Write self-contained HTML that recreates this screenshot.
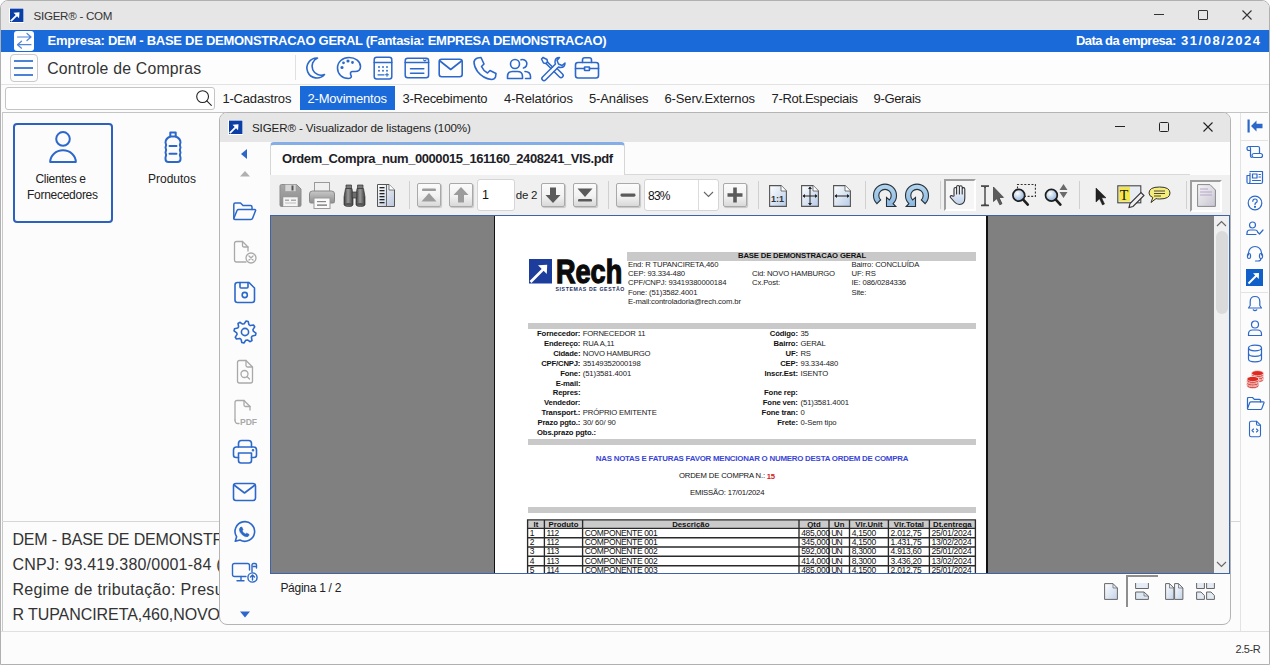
<!DOCTYPE html>
<html><head><meta charset="utf-8"><title>SIGER</title>
<style>
html,body{margin:0;padding:0;width:1270px;height:665px;overflow:hidden;background:#fcfcfc;}
body{position:relative;font-family:"Liberation Sans", sans-serif;}
.a{position:absolute;box-sizing:border-box;}
.t{position:absolute;white-space:pre;font-family:"Liberation Sans", sans-serif;}
svg.a{overflow:visible;}
</style></head><body>
<div class="a" style="left:0px;top:0px;width:1270px;height:665px;background:#fcfcfc;border:1px solid #b0b0b0;border-radius:8px 8px 0 0;"></div>
<div class="a" style="left:1px;top:1px;width:1268px;height:29px;background:#e6e6e6;border-radius:7px 7px 0 0;"></div>
<svg class="a" style="left:9px;top:8px;" width="15" height="15" viewBox="0 0 15 15"><rect x="0" y="0" width="15" height="15" fill="#fff"/>
<rect x="1" y="0.6" width="13.40" height="13.40" fill="#0b3fa6"/>
<path d="M1.80 13.20 L8.10 6.90" stroke="#fff" stroke-width="1.80" fill="none"/>
<path d="M4.50 4.65 L10.50 4.20 L10.05 10.20 Z" fill="#fff"/></svg>
<div class="t" style="left:33.50px;top:10.18px;font-size:11.6px;line-height:11.6px;color:#333;letter-spacing:-0.274px;">SIGER® - COM</div>
<div class="a" style="left:1154px;top:14px;width:10px;height:1px;background:#333;"></div>
<div class="a" style="left:1198px;top:10px;width:10px;height:10px;border:1px solid #333;border-radius:1px;"></div>
<svg class="a" style="left:1242px;top:10px;" width="10" height="10" viewBox="0 0 10 10"><path d="M0.5 0.5 L9.5 9.5 M9.5 0.5 L0.5 9.5" stroke="#333" stroke-width="1.1"/></svg>
<div class="a" style="left:1px;top:30px;width:1268px;height:22px;background:#1b6ad9;"></div>
<div class="a" style="left:14px;top:31px;width:20px;height:20px;background:#fff;border-radius:3px;"></div>
<svg class="a" style="left:14px;top:31px;" width="20" height="20" viewBox="0 0 20 20"><path d="M3.5 6 H17 M13 2.5 L17 6 L13 9.5" stroke="#4f86d8" stroke-width="1.2" fill="none" stroke-linecap="round" stroke-linejoin="round"/>
<path d="M17 13.7 H3.5 M7.5 10.2 L3.5 13.7 L7.5 17.2" stroke="#4f86d8" stroke-width="1.2" fill="none" stroke-linecap="round" stroke-linejoin="round"/></svg>
<div class="t" style="left:47.60px;top:34.00px;font-size:13px;line-height:13px;font-weight:700;color:#fff;letter-spacing:-0.278px;">Empresa: DEM - BASE DE DEMONSTRACAO GERAL (Fantasia: EMPRESA DEMONSTRACAO)</div>
<div class="t" style="left:1076.00px;top:34.00px;font-size:13px;line-height:13px;font-weight:700;color:#fff;letter-spacing:-0.539px;">Data da empresa:</div>
<div class="t" style="left:1181.00px;top:34.00px;font-size:13px;line-height:13px;font-weight:700;color:#fff;letter-spacing:1.548px;">31/08/2024</div>
<div class="a" style="left:1px;top:52px;width:1268px;height:32px;background:#fdfdfd;"></div>
<div class="a" style="left:10px;top:54px;width:28px;height:28px;border:1px solid #c9c9c9;border-radius:4px;background:#fdfdfd;"></div>
<div class="a" style="left:14px;top:60.25px;width:19px;height:1.5px;background:#4b82d6;"></div>
<div class="a" style="left:14px;top:67.25px;width:19px;height:1.5px;background:#4b82d6;"></div>
<div class="a" style="left:14px;top:74.25px;width:19px;height:1.5px;background:#4b82d6;"></div>
<div class="t" style="left:47.20px;top:60.63px;font-size:15.8px;line-height:15.8px;color:#333;letter-spacing:0.213px;">Controle de Compras</div>
<div class="a" style="left:295px;top:55px;width:1px;height:25px;background:#e0e0e0;"></div>
<div class="a" style="left:1px;top:84px;width:1268px;height:1px;background:#e3e3e3;"></div>
<div class="a" style="left:5px;top:87px;width:210px;height:23px;border:1px solid #c4c4c4;border-radius:3px;background:#fff;"></div>
<svg class="a" style="left:196px;top:90px;" width="17" height="17" viewBox="0 0 17 17"><circle cx="6.6" cy="6.6" r="5.9" stroke="#222" stroke-width="1.1" fill="none"/><path d="M10.8 10.8 L15.3 15.3" stroke="#222" stroke-width="1.1" stroke-linecap="round"/></svg>
<div class="a" style="left:300px;top:86px;width:95px;height:24px;background:#1b6ad9;"></div>
<div class="t" style="left:222.40px;top:92.00px;font-size:13px;line-height:13px;color:#222;letter-spacing:-0.181px;">1-Cadastros</div>
<div class="t" style="left:307.50px;top:92.00px;font-size:13px;line-height:13px;color:#fff;letter-spacing:-0.195px;">2-Movimentos</div>
<div class="t" style="left:402.50px;top:92.00px;font-size:13px;line-height:13px;color:#222;letter-spacing:-0.263px;">3-Recebimento</div>
<div class="t" style="left:504.00px;top:92.00px;font-size:13px;line-height:13px;color:#222;letter-spacing:-0.099px;">4-Relatórios</div>
<div class="t" style="left:589.00px;top:92.00px;font-size:13px;line-height:13px;color:#222;letter-spacing:-0.133px;">5-Análises</div>
<div class="t" style="left:664.40px;top:92.00px;font-size:13px;line-height:13px;color:#222;letter-spacing:-0.117px;">6-Serv.Externos</div>
<div class="t" style="left:771.50px;top:92.00px;font-size:13px;line-height:13px;color:#222;letter-spacing:-0.324px;">7-Rot.Especiais</div>
<div class="t" style="left:873.50px;top:92.00px;font-size:13px;line-height:13px;color:#222;letter-spacing:-0.336px;">9-Gerais</div>
<div class="a" style="left:2px;top:112px;width:1266px;height:1px;background:#c4c4c4;"></div>
<div class="a" style="left:1px;top:631px;width:1268px;height:1px;background:#e0e0e0;"></div>
<div class="t" style="left:1235.40px;top:643.69px;font-size:11px;line-height:11px;color:#333;letter-spacing:-0.375px;">2.5-R</div>
<div class="a" style="left:1240px;top:113px;width:1px;height:518px;background:#e3e3e3;"></div>
<div class="a" style="left:1241px;top:140px;width:27px;height:1px;background:#e3e3e3;"></div>
<div class="a" style="left:1241px;top:292px;width:27px;height:1px;background:#e3e3e3;"></div>
<div class="a" style="left:2px;top:112px;width:1px;height:519px;background:#c8c8c8;"></div>
<div class="a" style="left:2px;top:521px;width:1238px;height:1px;background:#d6d6d6;"></div>
<div class="t" style="left:12.40px;top:532.26px;font-size:16px;line-height:16px;color:#333;letter-spacing:-0.166px;">DEM - BASE DE DEMONSTRACAO GERAL</div>
<div class="t" style="left:12.40px;top:557.16px;font-size:16px;line-height:16px;color:#333;letter-spacing:0.217px;">CNPJ: 93.419.380/0001-84 (Matriz)</div>
<div class="t" style="left:12.40px;top:582.06px;font-size:16px;line-height:16px;color:#333;letter-spacing:0.324px;">Regime de tributação: Presumido</div>
<div class="t" style="left:12.40px;top:606.96px;font-size:16px;line-height:16px;color:#333;letter-spacing:-0.06px;">R TUPANCIRETA,460,NOVO HAMBURGO</div>
<div class="a" style="left:13px;top:123px;width:100px;height:100px;border:2px solid #2c62bd;border-radius:4px;"></div>
<div class="t" style="left:35.50px;top:173.24px;font-size:12px;line-height:12px;color:#222;letter-spacing:-0.318px;">Clientes e</div>
<div class="t" style="left:27.00px;top:189.04px;font-size:12px;line-height:12px;color:#222;letter-spacing:-0.277px;">Fornecedores</div>
<div class="t" style="left:148.00px;top:173.24px;font-size:12px;line-height:12px;color:#222;">Produtos</div>
<div class="a" style="left:219px;top:112px;width:1012px;height:513px;background:#fcfcfc;border:1px solid #b4b4b4;border-radius:8px;"></div>
<div class="a" style="left:220px;top:113px;width:1010px;height:29px;background:#e6e6e6;border-radius:7px 7px 0 0;"></div>
<svg class="a" style="left:228px;top:120px;" width="15" height="15" viewBox="0 0 15 15"><rect x="0" y="0" width="15" height="15" fill="#fff"/>
<rect x="1" y="0.6" width="13.40" height="13.40" fill="#0b3fa6"/>
<path d="M1.80 13.20 L8.10 6.90" stroke="#fff" stroke-width="1.80" fill="none"/>
<path d="M4.50 4.65 L10.50 4.20 L10.05 10.20 Z" fill="#fff"/></svg>
<div class="t" style="left:252.00px;top:121.93px;font-size:11.6px;line-height:11.6px;color:#222;letter-spacing:-0.117px;">SIGER® - Visualizador de listagens (100%)</div>
<div class="a" style="left:1115px;top:126px;width:10px;height:1px;background:#222;"></div>
<div class="a" style="left:1159px;top:122px;width:10px;height:10px;border:1px solid #222;border-radius:1.5px;"></div>
<svg class="a" style="left:1203px;top:122px;" width="10" height="10" viewBox="0 0 10 10"><path d="M0.5 0.5 L9.5 9.5 M9.5 0.5 L0.5 9.5" stroke="#222" stroke-width="1.1"/></svg>
<svg class="a" style="left:240px;top:149px;" width="8" height="10" viewBox="0 0 8 10"><path d="M7 0 L7 10 L1 5 Z" fill="#2c68ca"/></svg>
<svg class="a" style="left:239px;top:170px;" width="12" height="7" viewBox="0 0 12 7"><path d="M1 6.5 L6 1 L11 6.5 Z" fill="#b0b0b0"/></svg>
<svg class="a" style="left:232px;top:201px;" width="26" height="22" viewBox="0 0 26 22"><g fill="none" stroke="#2c68ca" stroke-width="1.5" stroke-linecap="round" stroke-linejoin="round"><path d="M1.8 17.5 V3.5 Q1.8 2 3.3 2 H8.5 L11 4.5 H18.5 Q20 4.5 20 6 V8.5"/><path d="M1.8 17.5 L5 9.5 Q5.5 8.5 6.7 8.5 H22.6 Q24 8.5 23.5 9.8 L20.6 17.2 Q20.2 18.5 18.8 18.5 H2.8 Q1.8 18.5 1.8 17.5 Z"/></g></svg>
<svg class="a" style="left:232px;top:240px;" width="26" height="24" viewBox="0 0 26 24"><g fill="none" stroke="#a9a9a9" stroke-width="1.3" stroke-linecap="round" stroke-linejoin="round"><path d="M14 22 H4.5 Q2.5 22 2.5 20 V3.5 Q2.5 1.5 4.5 1.5 H10.5 L16 7 V11"/><path d="M10.5 1.5 V5.5 Q10.5 7 12 7 H16"/><circle cx="19" cy="18" r="5"/><path d="M17 16 L21 20 M21 16 L17 20"/></g></svg>
<svg class="a" style="left:233px;top:281px;" width="24" height="23" viewBox="0 0 24 23"><g fill="none" stroke="#2c68ca" stroke-width="1.6" stroke-linecap="round" stroke-linejoin="round"><path d="M2 4 Q2 1.5 4.5 1.5 H16 L21.5 7 V19 Q21.5 21.5 19 21.5 H4.5 Q2 21.5 2 19 Z"/><path d="M7 1.5 V6 Q7 7 8 7 H14 Q15 7 15 6 V1.5"/><circle cx="11.75" cy="14" r="2.6"/></g></svg>
<svg class="a" style="left:232.5px;top:320px;" width="24" height="24" viewBox="0 0 24 24"><g fill="none" stroke="#2c68ca" stroke-width="1.6" stroke-linecap="round" stroke-linejoin="round"><path d="M20.26 11.19 L22.95 13.08 L22.53 15.19 L19.32 15.91 L18.42 17.27 L18.98 20.50 L17.19 21.70 L14.41 19.94 L12.81 20.26 L10.92 22.95 L8.81 22.53 L8.09 19.32 L6.73 18.42 L3.50 18.98 L2.30 17.19 L4.06 14.41 L3.74 12.81 L1.05 10.92 L1.47 8.81 L4.68 8.09 L5.58 6.73 L5.02 3.50 L6.81 2.30 L9.59 4.06 L11.19 3.74 L13.08 1.05 L15.19 1.47 L15.91 4.68 L17.27 5.58 L20.50 5.02 L21.70 6.81 L19.94 9.59 Z"/><circle cx="12" cy="12" r="3.6"/></g></svg>
<svg class="a" style="left:234px;top:359px;" width="22" height="26" viewBox="0 0 22 26"><g fill="none" stroke="#a9a9a9" stroke-width="1.3" stroke-linecap="round" stroke-linejoin="round"><path d="M3.5 3.5 Q3.5 1.5 5.5 1.5 H12 L18.5 8 V22 Q18.5 24 16.5 24 H5.5 Q3.5 24 3.5 22 Z"/><path d="M12 1.5 V6.5 Q12 8 13.5 8 H18.5"/><circle cx="10.5" cy="15" r="3.5"/><path d="M13 17.5 L15.5 20"/></g></svg>
<svg class="a" style="left:232px;top:399px;" width="26" height="27" viewBox="0 0 26 27"><g fill="none" stroke="#a9a9a9" stroke-width="1.3" stroke-linecap="round" stroke-linejoin="round"><path d="M3 21 V3.5 Q3 1.5 5 1.5 H12 L18 7.5 V11"/><path d="M12 1.5 V6 Q12 7.5 13.5 7.5 H18"/><path d="M3 21 Q3 24.5 6 24.5 H7"/></g></svg>
<div class="t" style="left:240.00px;top:417.72px;font-size:8.6px;line-height:8.6px;font-weight:700;color:#a9a9a9;letter-spacing:-0.100px;">PDF</div>
<svg class="a" style="left:232px;top:439px;" width="26" height="26" viewBox="0 0 26 26"><g fill="none" stroke="#2c68ca" stroke-width="1.6" stroke-linecap="round" stroke-linejoin="round"><path d="M6.5 8 V4.5 Q6.5 1.5 9.5 1.5 H16.5 Q19.5 1.5 19.5 4.5 V8"/><path d="M6.5 18.5 H4 Q1.5 18.5 1.5 16 V11 Q1.5 8 4.5 8 H21.5 Q24.5 8 24.5 11 V16 Q24.5 18.5 22 18.5 H19.5"/><path d="M6.5 14 H19.5 V21.5 Q19.5 24 17 24 H9 Q6.5 24 6.5 21.5 Z"/><circle cx="21" cy="11.3" r="0.5" fill="#2c68ca"/></g></svg>
<svg class="a" style="left:232px;top:482px;" width="25" height="20" viewBox="0 0 25 20"><g fill="none" stroke="#2c68ca" stroke-width="1.6" stroke-linecap="round" stroke-linejoin="round"><rect x="1.5" y="1.5" width="22" height="17" rx="2.5"/><path d="M2 3 L12.5 11 L23 3"/></g></svg>
<svg class="a" style="left:232px;top:520px;" width="24" height="24" viewBox="0 0 24 24"><g fill="none" stroke="#2c68ca" stroke-width="1.6" stroke-linecap="round" stroke-linejoin="round"><path d="M3.3 21.2 L4.6 16.8 A9.8 9.8 0 1 1 8 20 Z"/><path d="M8.3 7.6 Q9 6.7 9.8 7 L11 9.5 Q11.1 10 10.2 10.8 Q11 13 13.5 14 Q14.2 13.2 14.6 13.2 L17 14.3 Q17.2 15.6 16 16.5 Q13.5 17.5 10.5 15 Q7.5 12.5 7.4 9.8 Q7.4 8.5 8.3 7.6 Z" fill="#2c68ca" stroke-width="0.6"/></g></svg>
<svg class="a" style="left:231px;top:562px;" width="28" height="21" viewBox="0 0 28 21"><g fill="none" stroke="#2c68ca" stroke-width="1.4" stroke-linecap="round" stroke-linejoin="round"><path d="M15 14.5 H3.5 Q1.5 14.5 1.5 12.5 V3.5 Q1.5 1.5 3.5 1.5 H16.5 Q18.5 1.5 18.5 3.5 V8"/><path d="M10 14.5 V18.5 M6 18.8 H13"/><path d="M21 10 V3 Q21 1.5 22.5 1.5 H24 Q25.5 1.5 25.5 3 V6"/><path d="M22 4.5 H24.5"/><circle cx="21.5" cy="15.5" r="4.6"/><path d="M21.5 18 V13 M19.5 15 L21.5 13 L23.5 15"/></g></svg>
<svg class="a" style="left:239px;top:610px;" width="12" height="9" viewBox="0 0 12 9"><path d="M1 1.5 L11 1.5 L6 7.5 Z" fill="#2c68ca"/></svg>
<div class="a" style="left:270px;top:142px;width:355px;height:33px;background:#fdfdfd;border:1px solid #d6d6d6;border-top:3px solid #86aee6;border-bottom:none;border-radius:4px 4px 0 0;"></div>
<div class="t" style="left:282.00px;top:151.70px;font-size:13px;line-height:13px;font-weight:700;color:#1e1e28;letter-spacing:-0.424px;">Ordem_Compra_num_0000015_161160_2408241_VIS.pdf</div>
<div class="a" style="left:270px;top:175px;width:960px;height:40px;background:#f0f0f0;"></div>
<div class="a" style="left:624px;top:174px;width:566px;height:1px;background:#d9d9d9;"></div>
<div class="a" style="left:1190px;top:142px;width:40px;height:33px;background:#fdfdfd;"></div>
<div class="a" style="left:409px;top:181px;width:1px;height:28px;background:#d0d0d0;"></div>
<div class="a" style="left:608px;top:181px;width:1px;height:28px;background:#d0d0d0;"></div>
<div class="a" style="left:758px;top:181px;width:1px;height:28px;background:#d0d0d0;"></div>
<div class="a" style="left:865px;top:181px;width:1px;height:28px;background:#d0d0d0;"></div>
<div class="a" style="left:940px;top:181px;width:1px;height:28px;background:#d0d0d0;"></div>
<div class="a" style="left:1079px;top:181px;width:1px;height:28px;background:#d0d0d0;"></div>
<div class="a" style="left:1186px;top:181px;width:1px;height:28px;background:#d0d0d0;"></div>
<svg class="a" style="left:279px;top:184px;" width="23" height="23" viewBox="0 0 23 23"><defs><linearGradient id="gd" x1="0" y1="0" x2="0" y2="1"><stop offset="0" stop-color="#a8a8a8"/><stop offset="1" stop-color="#8a8a8a"/></linearGradient></defs>
<path d="M1 2 Q1 0.5 2.5 0.5 H17.5 L22 5 V21 Q22 22.5 20.5 22.5 H2.5 Q1 22.5 1 21 Z" fill="url(#gd)" stroke="#8d8d8d"/>
<rect x="6" y="0.5" width="11" height="7" fill="#d6d6d6" stroke="#9a9a9a" stroke-width="0.6"/>
<rect x="12.5" y="1.5" width="2" height="5" fill="#555"/>
<rect x="4" y="13" width="15" height="9.5" fill="#f4f4f4" stroke="#9a9a9a" stroke-width="0.6"/>
<rect x="6" y="15.5" width="4" height="1.5" fill="#aaa"/><rect x="12" y="15.5" width="5" height="1.5" fill="#aaa"/><rect x="6" y="18.5" width="11" height="1" fill="#bbb"/></svg>
<svg class="a" style="left:309px;top:182px;" width="26" height="27" viewBox="0 0 26 27"><defs><linearGradient id="gp" x1="0" y1="0" x2="0" y2="1"><stop offset="0" stop-color="#c8c8c8"/><stop offset="1" stop-color="#8f8f8f"/></linearGradient></defs>
<rect x="5.5" y="0.5" width="15" height="10" fill="#f0f0f0" stroke="#9a9a9a"/>
<path d="M0.5 12 Q0.5 9 3.5 9 H22.5 Q25.5 9 25.5 12 V19.5 Q25.5 21 24 21 H2 Q0.5 21 0.5 19.5 Z" fill="url(#gp)" stroke="#888"/>
<rect x="5" y="16" width="16" height="10.5" fill="#fafafa" stroke="#9a9a9a"/>
<rect x="8" y="19" width="9" height="1.2" fill="#888"/><rect x="8" y="22.5" width="10" height="1.2" fill="#666"/></svg>
<svg class="a" style="left:343px;top:184px;" width="24" height="24" viewBox="0 0 24 24"><defs><linearGradient id="gb" x1="0" y1="0" x2="1" y2="0"><stop offset="0" stop-color="#3c3c3c"/><stop offset="0.45" stop-color="#9a9a9a"/><stop offset="1" stop-color="#3c3c3c"/></linearGradient></defs>
<g stroke="#333" stroke-width="0.7">
<path d="M3 1 H8.5 V4.5 H3 Z" fill="#7a7a7a"/><path d="M14.5 1 H20 V4.5 H14.5 Z" fill="#7a7a7a"/>
<path d="M2.5 4.5 H9 L10 13 V20.5 Q10 22.5 6 22.5 Q1 22.5 1 20.5 V13 Z" fill="url(#gb)"/>
<path d="M14 4.5 H20.5 L22 13 V20.5 Q22 22.5 17.5 22.5 Q13 22.5 13 20.5 V13 Z" fill="url(#gb)"/>
<path d="M9.2 8 H13.8 V14 H9.2 Z" fill="#6d6d6d"/></g>
<ellipse cx="5.5" cy="20.3" rx="3.6" ry="1.4" fill="#555"/><ellipse cx="17.5" cy="20.3" rx="3.6" ry="1.4" fill="#555"/></svg>
<svg class="a" style="left:377px;top:184px;" width="19" height="24" viewBox="0 0 19 24"><defs><linearGradient id="gr" x1="0" y1="0" x2="1" y2="1"><stop offset="0" stop-color="#fff"/><stop offset="1" stop-color="#b9c6dd"/></linearGradient></defs>
<path d="M0.5 0.5 H12 L17.5 6 V22.5 H0.5 Z" fill="url(#gr)" stroke="#555"/>
<path d="M12 0.5 V6 H17.5" fill="#fff" stroke="#555" stroke-width="0.8"/>
<rect x="9" y="0.5" width="1" height="22" fill="#666"/>
<g fill="#222"><rect x="2.5" y="3" width="5" height="1.3"/><rect x="2.5" y="6" width="5" height="1.3"/><rect x="2.5" y="9" width="5" height="1.3"/><rect x="2.5" y="12" width="5" height="1.3"/><rect x="2.5" y="15" width="5" height="1.3"/><rect x="2.5" y="18" width="5" height="1.3"/></g></svg>
<div class="a" style="left:417px;top:183px;width:24px;height:24px;border:1px solid #a9a9a9;border-radius:2px;background:linear-gradient(#fbfbfb,#f2f2f2 55%,#d9d9d9);box-shadow:1px 1px 1px rgba(0,0,0,0.18);"></div>
<svg class="a" style="left:417px;top:183px;" width="24" height="24" viewBox="0 0 24 24"><rect x="5" y="5.5" width="14" height="2.6" rx="1.2" fill="#9c9c9c"/><path d="M4.5 18.5 L12 10 L19.5 18.5 Z" fill="#9c9c9c"/></svg>
<div class="a" style="left:449px;top:183px;width:24px;height:24px;border:1px solid #a9a9a9;border-radius:2px;background:linear-gradient(#fbfbfb,#f2f2f2 55%,#d9d9d9);box-shadow:1px 1px 1px rgba(0,0,0,0.18);"></div>
<svg class="a" style="left:449px;top:183px;" width="24" height="24" viewBox="0 0 24 24"><path d="M12 4 L19.5 12 H15 V19.5 H9 V12 H4.5 Z" fill="#9c9c9c"/></svg>
<div class="a" style="left:477px;top:179px;width:38px;height:32px;background:#fff;border:1px solid #d5d5d5;border-radius:3px;"></div>
<div class="t" style="left:482.00px;top:189.42px;font-size:12.5px;line-height:12.5px;color:#111;">1</div>
<div class="t" style="left:515.80px;top:190.27px;font-size:11.5px;line-height:11.5px;color:#222;letter-spacing:-0.294px;">de 2</div>
<div class="a" style="left:541px;top:183px;width:24px;height:24px;border:1px solid #a9a9a9;border-radius:2px;background:linear-gradient(#fbfbfb,#f2f2f2 55%,#d9d9d9);box-shadow:1px 1px 1px rgba(0,0,0,0.18);"></div>
<svg class="a" style="left:541px;top:183px;" width="24" height="24" viewBox="0 0 24 24"><path d="M12 20 L19.5 12 H15 V4.5 H9 V12 H4.5 Z" fill="#5a5a5a"/></svg>
<div class="a" style="left:573px;top:183px;width:24px;height:24px;border:1px solid #a9a9a9;border-radius:2px;background:linear-gradient(#fbfbfb,#f2f2f2 55%,#d9d9d9);box-shadow:1px 1px 1px rgba(0,0,0,0.18);"></div>
<svg class="a" style="left:573px;top:183px;" width="24" height="24" viewBox="0 0 24 24"><path d="M4.5 5.5 L12 14 L19.5 5.5 Z" fill="#5a5a5a"/><rect x="5" y="16" width="14" height="2.6" rx="1.2" fill="#5a5a5a"/></svg>
<div class="a" style="left:616px;top:183px;width:24px;height:24px;border:1px solid #a9a9a9;border-radius:2px;background:linear-gradient(#fbfbfb,#f2f2f2 55%,#d9d9d9);box-shadow:1px 1px 1px rgba(0,0,0,0.18);"></div>
<svg class="a" style="left:616px;top:183px;" width="24" height="24" viewBox="0 0 24 24"><rect x="4.5" y="10.5" width="15" height="3.2" rx="1.4" fill="#5a5a5a"/></svg>
<div class="a" style="left:644px;top:179px;width:75px;height:32px;background:#fff;border:1px solid #d5d5d5;border-radius:3px;"></div>
<div class="a" style="left:698px;top:180px;width:1px;height:30px;background:#dcdcdc;"></div>
<svg class="a" style="left:703px;top:191px;" width="11" height="7" viewBox="0 0 11 7"><path d="M1 1 L5.5 5.5 L10 1" stroke="#666" stroke-width="1.1" fill="none"/></svg>
<div class="t" style="left:648.00px;top:189.84px;font-size:12px;line-height:12px;color:#111;letter-spacing:-0.759px;">83%</div>
<div class="a" style="left:723px;top:183px;width:24px;height:24px;border:1px solid #a9a9a9;border-radius:2px;background:linear-gradient(#fbfbfb,#f2f2f2 55%,#d9d9d9);box-shadow:1px 1px 1px rgba(0,0,0,0.18);"></div>
<svg class="a" style="left:723px;top:183px;" width="24" height="24" viewBox="0 0 24 24"><path d="M10.2 4.5 H13.8 V10.2 H19.5 V13.8 H13.8 V19.5 H10.2 V13.8 H4.5 V10.2 H10.2 Z" fill="#5a5a5a"/></svg>
<svg class="a" style="left:769px;top:184.5px;" width="18" height="22" viewBox="0 0 18 22"><defs><linearGradient id="pg1" x1="0" y1="0" x2="1" y2="1"><stop offset="0" stop-color="#ffffff"/><stop offset="1" stop-color="#b8cbe8"/></linearGradient></defs><path d="M0.6 0.6 H12.0 L17.4 6 V21.4 H0.6 Z" fill="url(#pg1)" stroke="#555" stroke-width="1.1"/><path d="M12.0 0.6 V6 H17.4" fill="#fff" stroke="#555" stroke-width="0.8"/><text x="2" y="17" font-size="9" font-family="Liberation Sans" font-weight="700" fill="#333">1:1</text></svg>
<svg class="a" style="left:801px;top:184.5px;" width="18" height="22" viewBox="0 0 18 22"><defs><linearGradient id="pg2" x1="0" y1="0" x2="1" y2="1"><stop offset="0" stop-color="#ffffff"/><stop offset="1" stop-color="#b8cbe8"/></linearGradient></defs><path d="M0.6 0.6 H12.0 L17.4 6 V21.4 H0.6 Z" fill="url(#pg2)" stroke="#555" stroke-width="1.1"/><path d="M12.0 0.6 V6 H17.4" fill="#fff" stroke="#555" stroke-width="0.8"/><path d="M9 2 V20 M2 11 H16" stroke="#222" stroke-width="1"/><path d="M9 1.5 L7 4 H11 Z M9 20.5 L7 18 H11 Z M1.5 11 L4 9 V13 Z M16.5 11 L14 9 V13 Z" fill="#222"/></svg>
<svg class="a" style="left:833px;top:184.5px;" width="18" height="22" viewBox="0 0 18 22"><defs><linearGradient id="pg3" x1="0" y1="0" x2="1" y2="1"><stop offset="0" stop-color="#ffffff"/><stop offset="1" stop-color="#b8cbe8"/></linearGradient></defs><path d="M0.6 0.6 H12.0 L17.4 6 V21.4 H0.6 Z" fill="url(#pg3)" stroke="#555" stroke-width="1.1"/><path d="M12.0 0.6 V6 H17.4" fill="#fff" stroke="#555" stroke-width="0.8"/><path d="M2 11 H16" stroke="#222" stroke-width="1"/><path d="M1.5 11 L4 9 V13 Z M16.5 11 L14 9 V13 Z" fill="#222"/></svg>
<svg class="a" style="left:868px;top:180px;" width="34" height="28" viewBox="0 0 34 28"><defs><linearGradient id="rg1" x1="0" y1="0" x2="0" y2="1"><stop offset="0" stop-color="#b4d6ef"/><stop offset="1" stop-color="#8cb8df"/></linearGradient></defs><path d="M8.87 23.73 A11.5 11.5 0 1 1 25.13 23.73 L27.8 26.5 L18.5 26.5 L18.5 17.4 L21.38 19.98 A6.2 6.2 0 1 0 12.62 19.98 Z" fill="url(#rg1)" stroke="#27313b" stroke-width="1.1" stroke-linejoin="miter"/></svg>
<svg class="a" style="left:900px;top:180px;" width="34" height="28" viewBox="0 0 34 28"><defs><linearGradient id="rg2" x1="0" y1="0" x2="0" y2="1"><stop offset="0" stop-color="#b4d6ef"/><stop offset="1" stop-color="#8cb8df"/></linearGradient></defs><g transform="translate(34,0) scale(-1,1)"><path d="M8.87 23.73 A11.5 11.5 0 1 1 25.13 23.73 L27.8 26.5 L18.5 26.5 L18.5 17.4 L21.38 19.98 A6.2 6.2 0 1 0 12.62 19.98 Z" fill="url(#rg2)" stroke="#27313b" stroke-width="1.1" stroke-linejoin="miter"/></g></svg>
<div class="a" style="left:944px;top:179px;width:32px;height:32px;background:#f6f6f6;border:2px solid #9e9e9e;border-right-color:#fff;border-bottom-color:#fff;"></div>
<svg class="a" style="left:949px;top:184px;" width="22" height="22" viewBox="0 0 22 22"><defs><linearGradient id="hg" x1="0" y1="0" x2="0" y2="1"><stop offset="0" stop-color="#fff"/><stop offset="1" stop-color="#bdd0ea"/></linearGradient></defs>
<path d="M5 12 V5 Q5 3.5 6.3 3.5 Q7.6 3.5 7.6 5 V10 V3 Q7.6 1.5 9 1.5 Q10.4 1.5 10.4 3 V10 V3.2 Q10.4 1.8 11.8 1.8 Q13.2 1.8 13.2 3.2 V10 V5 Q13.2 3.6 14.5 3.6 Q15.8 3.6 15.8 5 V14 Q15.8 20.5 10.5 20.5 Q7.5 20.5 5.5 18 L1.5 13.5 Q0.8 12.5 1.8 11.8 Q2.8 11.2 3.8 12.2 Z" fill="url(#hg)" stroke="#333" stroke-width="1.1" stroke-linejoin="round"/></svg>
<svg class="a" style="left:978px;top:183px;" width="28" height="26" viewBox="0 0 28 26"><path d="M3 3 H11 M7 3 V22.5 M3 22.5 H11" stroke="#444" stroke-width="1.4" fill="none"/><path d="M3.3 3.3 Q7 3 7 5 Q7 3 10.7 3.3 M3.3 22.2 Q7 22.5 7 20.5 Q7 22.5 10.7 22.2" stroke="#444" stroke-width="0.8" fill="none"/><path d="M15.5 4 V18.5 L18.8 15.6 L21.8 21.8 L24 20.7 L21.1 14.6 L25.5 14.4 Z" fill="#5c5c5c" stroke="#3a3a3a" stroke-width="0.7" stroke-linejoin="round"/></svg>
<svg class="a" style="left:1005px;top:180px;" width="34" height="30" viewBox="0 0 34 30"><defs><radialGradient id="lg1" cx="0.4" cy="0.35" r="0.7"><stop offset="0" stop-color="#ffffff"/><stop offset="1" stop-color="#86acd6"/></radialGradient></defs>
<circle cx="13.8" cy="15.3" r="5.9" fill="url(#lg1)" stroke="#1e1e1e" stroke-width="1.7"/><path d="M18.2 19.6 L22.8 24.6" stroke="#1e1e1e" stroke-width="2.6" stroke-linecap="round"/><path d="M12.5 8.5 V4.5 H30.4 V16.4 H19.5" stroke="#333" stroke-width="1.1" stroke-dasharray="2 1.6" fill="none"/></svg>
<svg class="a" style="left:1037px;top:180px;" width="34" height="30" viewBox="0 0 34 30"><defs><radialGradient id="lg2" cx="0.4" cy="0.35" r="0.7"><stop offset="0" stop-color="#ffffff"/><stop offset="1" stop-color="#86acd6"/></radialGradient></defs>
<circle cx="14.4" cy="15.3" r="5.9" fill="url(#lg2)" stroke="#1e1e1e" stroke-width="1.7"/><path d="M18.8 19.6 L23.4 24.6" stroke="#1e1e1e" stroke-width="2.6" stroke-linecap="round"/><path d="M22.5 10 L26.5 4 L30.5 10 Z M22.5 12 L26.5 18 L30.5 12 Z" fill="#6a6a6a"/></svg>
<svg class="a" style="left:1094.5px;top:187px;" width="12" height="19" viewBox="0 0 12 19"><path d="M1 1 V15 L4.5 11.8 L7.5 18 L9.5 17 L6.6 10.8 L11 10.8 Z" fill="#222" stroke="#111" stroke-width="0.5"/></svg>
<svg class="a" style="left:1117px;top:185px;" width="28" height="24" viewBox="0 0 28 24"><rect x="0.8" y="0.8" width="23" height="17" fill="#e8edf3" stroke="#444" stroke-width="1.1"/><rect x="2" y="2" width="11" height="14.5" fill="#f4e64a"/>
<text x="2.8" y="14.5" font-size="14" font-family="Liberation Serif" font-weight="400" fill="#111">T</text>
<path d="M12 22.5 L13 18.5 L24 7.5 L27 10.5 L16 21.5 Z" fill="#f0f0f0" stroke="#333" stroke-width="1.1"/></svg>
<svg class="a" style="left:1148px;top:186px;" width="23" height="18" viewBox="0 0 23 18"><path d="M11.5 1 Q22 1 22 7 Q22 13 11.5 13 Q9.5 13 8 12.6 L3 16.5 L4.8 11.5 Q1 10 1 7 Q1 1 11.5 1 Z" fill="#f6ec7b" stroke="#333" stroke-width="1"/><path d="M6 5 H17 M6 7.5 H17 M6 10 H13" stroke="#333" stroke-width="0.9"/></svg>
<div class="a" style="left:1190px;top:179.5px;width:32px;height:32px;background:#f6f6f6;border:2px solid #9e9e9e;border-right-color:#fff;border-bottom-color:#fff;"></div>
<svg class="a" style="left:1197px;top:184px;" width="19" height="23" viewBox="0 0 19 23"><defs><linearGradient id="pp" x1="0" y1="0" x2="1" y2="1"><stop offset="0" stop-color="#f5f5f5"/><stop offset="1" stop-color="#c9c4d2"/></linearGradient></defs>
<path d="M0.6 0.6 H13 L18.4 6 V22.4 H0.6 Z" fill="url(#pp)" stroke="#888" stroke-width="1"/><path d="M3 5 H11 M3 8 H15 M3 11 H15" stroke="#b7a6c8" stroke-width="1"/></svg>
<div class="a" style="left:270px;top:215px;width:960px;height:359px;background:#808080;border:1px solid #3d64a6;"></div>
<div class="a" style="left:1214px;top:216px;width:15px;height:357px;background:#f0f0f0;"></div>
<svg class="a" style="left:1216px;top:220px;" width="11" height="7" viewBox="0 0 11 7"><path d="M1 6 L5.5 1.5 L10 6" stroke="#666" stroke-width="1.1" fill="none"/></svg>
<div class="a" style="left:1215.5px;top:231px;width:12px;height:83px;background:#dadada;border-radius:6px;"></div>
<svg class="a" style="left:1216px;top:561px;" width="11" height="7" viewBox="0 0 11 7"><path d="M1 1 L5.5 5.5 L10 1" stroke="#666" stroke-width="1.1" fill="none"/></svg>
<div class="t" style="left:280.40px;top:581.84px;font-size:12px;line-height:12px;color:#222;letter-spacing:-0.277px;">Página 1 / 2</div>
<svg class="a" style="left:1103.5px;top:583px;" width="14" height="17" viewBox="0 0 14 17"><defs><linearGradient id="mp1" x1="0" y1="0" x2="1" y2="1"><stop offset="0" stop-color="#fff"/><stop offset="1" stop-color="#c2d2ea"/></linearGradient></defs><path d="M0.6 0.6 H9.0 L13.4 5 V16.4 H0.6 Z" fill="url(#mp1)" stroke="#666" stroke-width="1"/><path d="M9.0 0.6 V5 H13.4" fill="none" stroke="#666" stroke-width="0.7"/></svg>
<div class="a" style="left:1126px;top:575px;width:32px;height:32px;border-top:2px solid #8e8e8e;border-left:2px solid #8e8e8e;"></div>
<svg class="a" style="left:1135px;top:583px;" width="15" height="17" viewBox="0 0 15 17"><path d="M0.6 0 V5.5 H13.4 V0" fill="#e6ecf5" stroke="#666" stroke-width="1"/><path d="M0.6 9 H9 L13.4 13 V16.4 H0.6 Z" fill="#dde6f3" stroke="#666" stroke-width="1"/><path d="M9 9 V13 H13.4" fill="none" stroke="#666" stroke-width="0.7"/></svg>
<svg class="a" style="left:1164.5px;top:583px;" width="9.5" height="17" viewBox="0 0 9.5 17"><defs><linearGradient id="mp2" x1="0" y1="0" x2="1" y2="1"><stop offset="0" stop-color="#fff"/><stop offset="1" stop-color="#c2d2ea"/></linearGradient></defs><path d="M0.6 0.6 H4.5 L8.9 5 V16.4 H0.6 Z" fill="url(#mp2)" stroke="#666" stroke-width="1"/><path d="M4.5 0.6 V5 H8.9" fill="none" stroke="#666" stroke-width="0.7"/></svg>
<svg class="a" style="left:1174px;top:583px;" width="9.5" height="17" viewBox="0 0 9.5 17"><defs><linearGradient id="mp3" x1="0" y1="0" x2="1" y2="1"><stop offset="0" stop-color="#fff"/><stop offset="1" stop-color="#c2d2ea"/></linearGradient></defs><path d="M0.6 0.6 H4.5 L8.9 5 V16.4 H0.6 Z" fill="url(#mp3)" stroke="#666" stroke-width="1"/><path d="M4.5 0.6 V5 H8.9" fill="none" stroke="#666" stroke-width="0.7"/></svg>
<svg class="a" style="left:1196px;top:583px;" width="19" height="17" viewBox="0 0 19 17"><g fill="#e3eaf4" stroke="#666" stroke-width="1"><path d="M0.6 0 V5.5 H8.4 V0"/><path d="M10.6 0 V5.5 H18.4 V0"/><path d="M0.6 9 H5 L8.4 12.5 V16.4 H0.6 Z"/><path d="M10.6 9 H15 L18.4 12.5 V16.4 H10.6 Z"/></g></svg>
<div class="a" style="left:494px;top:216px;width:494px;height:357px;background:#fff;border-left:1.5px solid #111;border-right:2px solid #111;"></div>
<svg class="a" style="left:529px;top:259px;" width="23" height="25" viewBox="0 0 23 25"><rect x="0" y="0" width="23" height="24.5" fill="#1d3d9c"/><path d="M1.5 23 L15.5 9" stroke="#fff" stroke-width="2.6"/><path d="M9 6.2 L18.2 5.8 L17.8 15 Z" fill="#fff"/></svg>
<div class="t" style="left:555.50px;top:255.47px;font-size:33px;line-height:33px;font-weight:700;color:#0b0b0b;transform-origin:0 0;transform:scaleX(0.82);-webkit-text-stroke:1.3px #0b0b0b;">Rech</div>
<div class="t" style="left:555.50px;top:287.40px;font-size:5.2px;line-height:5.2px;font-weight:700;color:#1b2f63;letter-spacing:0.609px;">SISTEMAS DE GESTÃO</div>
<div class="a" style="left:627.3px;top:252px;width:349px;height:8.6px;background:#c9c9c9;"></div>
<div class="t" style="left:738.00px;top:252.48px;font-size:7.7px;line-height:7.7px;font-weight:700;color:#111;letter-spacing:-0.152px;">BASE DE DEMONSTRACAO GERAL</div>
<div class="t" style="left:628.00px;top:260.78px;font-size:7.7px;line-height:7.7px;color:#222;letter-spacing:-0.145px;">End: R TUPANCIRETA,460</div>
<div class="t" style="left:628.00px;top:270.08px;font-size:7.7px;line-height:7.7px;color:#222;letter-spacing:-0.137px;">CEP: 93.334-480</div>
<div class="t" style="left:628.00px;top:279.38px;font-size:7.7px;line-height:7.7px;color:#222;letter-spacing:-0.144px;">CPF/CNPJ: 93419380000184</div>
<div class="t" style="left:628.00px;top:288.68px;font-size:7.7px;line-height:7.7px;color:#222;letter-spacing:-0.130px;">Fone: (51)3582.4001</div>
<div class="t" style="left:628.00px;top:297.98px;font-size:7.7px;line-height:7.7px;color:#222;letter-spacing:-0.122px;">E-mail:controladoria@rech.com.br</div>
<div class="t" style="left:752.00px;top:270.38px;font-size:7.7px;line-height:7.7px;color:#222;letter-spacing:-0.164px;">Cid: NOVO HAMBURGO</div>
<div class="t" style="left:752.00px;top:279.48px;font-size:7.7px;line-height:7.7px;color:#222;letter-spacing:-0.135px;">Cx.Post:</div>
<div class="t" style="left:851.50px;top:260.78px;font-size:7.7px;line-height:7.7px;color:#222;letter-spacing:-0.142px;">Bairro: CONCLUÍDA</div>
<div class="t" style="left:851.50px;top:270.08px;font-size:7.7px;line-height:7.7px;color:#222;letter-spacing:-0.164px;">UF: RS</div>
<div class="t" style="left:851.50px;top:279.38px;font-size:7.7px;line-height:7.7px;color:#222;letter-spacing:-0.131px;">IE: 086/0284336</div>
<div class="t" style="left:851.50px;top:288.68px;font-size:7.7px;line-height:7.7px;color:#222;letter-spacing:-0.125px;">Site:</div>
<div class="a" style="left:527.7px;top:322.9px;width:448.3px;height:6.3px;background:#c9c9c9;"></div>
<div class="t" style="left:537.04px;top:330.08px;font-size:7.7px;line-height:7.7px;font-weight:700;color:#111;letter-spacing:-0.146px;">Fornecedor:</div>
<div class="t" style="left:582.80px;top:330.08px;font-size:7.7px;line-height:7.7px;color:#222;letter-spacing:-0.176px;">FORNECEDOR 11</div>
<div class="t" style="left:544.07px;top:339.98px;font-size:7.7px;line-height:7.7px;font-weight:700;color:#111;letter-spacing:-0.153px;">Endereço:</div>
<div class="t" style="left:582.80px;top:339.98px;font-size:7.7px;line-height:7.7px;color:#222;letter-spacing:-0.152px;">RUA A,11</div>
<div class="t" style="left:553.18px;top:349.88px;font-size:7.7px;line-height:7.7px;font-weight:700;color:#111;letter-spacing:-0.153px;">Cidade:</div>
<div class="t" style="left:582.80px;top:349.88px;font-size:7.7px;line-height:7.7px;color:#222;letter-spacing:-0.190px;">NOVO HAMBURGO</div>
<div class="t" style="left:541.18px;top:359.78px;font-size:7.7px;line-height:7.7px;font-weight:700;color:#111;letter-spacing:-0.165px;">CPF/CNPJ:</div>
<div class="t" style="left:582.80px;top:359.78px;font-size:7.7px;line-height:7.7px;color:#222;letter-spacing:-0.150px;">35149352000198</div>
<div class="t" style="left:560.22px;top:369.68px;font-size:7.7px;line-height:7.7px;font-weight:700;color:#111;letter-spacing:-0.170px;">Fone:</div>
<div class="t" style="left:582.80px;top:369.68px;font-size:7.7px;line-height:7.7px;color:#222;letter-spacing:-0.136px;">(51)3581.4001</div>
<div class="t" style="left:555.66px;top:379.58px;font-size:7.7px;line-height:7.7px;font-weight:700;color:#111;letter-spacing:-0.139px;">E-mail:</div>
<div class="t" style="left:552.76px;top:389.48px;font-size:7.7px;line-height:7.7px;font-weight:700;color:#111;letter-spacing:-0.155px;">Repres:</div>
<div class="t" style="left:544.07px;top:399.38px;font-size:7.7px;line-height:7.7px;font-weight:700;color:#111;letter-spacing:-0.153px;">Vendedor:</div>
<div class="t" style="left:541.59px;top:409.28px;font-size:7.7px;line-height:7.7px;font-weight:700;color:#111;letter-spacing:-0.131px;">Transport.:</div>
<div class="t" style="left:582.80px;top:409.28px;font-size:7.7px;line-height:7.7px;color:#222;letter-spacing:-0.166px;">PRÓPRIO EMITENTE</div>
<div class="t" style="left:537.46px;top:419.18px;font-size:7.7px;line-height:7.7px;font-weight:700;color:#111;letter-spacing:-0.131px;">Prazo pgto.:</div>
<div class="t" style="left:582.80px;top:419.18px;font-size:7.7px;line-height:7.7px;color:#222;letter-spacing:-0.124px;">30/ 60/ 90</div>
<div class="t" style="left:537.00px;top:429.08px;font-size:7.7px;line-height:7.7px;font-weight:700;color:#111;letter-spacing:-0.132px;">Obs.prazo pgto.:</div>
<div class="t" style="left:769.87px;top:330.08px;font-size:7.7px;line-height:7.7px;font-weight:700;color:#111;letter-spacing:-0.157px;">Código:</div>
<div class="t" style="left:800.60px;top:330.08px;font-size:7.7px;line-height:7.7px;color:#222;letter-spacing:-0.278px;">35</div>
<div class="t" style="left:773.58px;top:339.98px;font-size:7.7px;line-height:7.7px;font-weight:700;color:#111;letter-spacing:-0.137px;">Bairro:</div>
<div class="t" style="left:800.60px;top:339.98px;font-size:7.7px;line-height:7.7px;color:#222;letter-spacing:-0.212px;">GERAL</div>
<div class="t" style="left:785.59px;top:349.88px;font-size:7.7px;line-height:7.7px;font-weight:700;color:#111;letter-spacing:-0.208px;">UF:</div>
<div class="t" style="left:800.60px;top:349.88px;font-size:7.7px;line-height:7.7px;color:#222;letter-spacing:-0.347px;">RS</div>
<div class="t" style="left:780.20px;top:359.78px;font-size:7.7px;line-height:7.7px;font-weight:700;color:#111;letter-spacing:-0.199px;">CEP:</div>
<div class="t" style="left:800.60px;top:359.78px;font-size:7.7px;line-height:7.7px;color:#222;letter-spacing:-0.141px;">93.334-480</div>
<div class="t" style="left:764.46px;top:369.68px;font-size:7.7px;line-height:7.7px;font-weight:700;color:#111;letter-spacing:-0.125px;">Inscr.Est:</div>
<div class="t" style="left:800.60px;top:369.68px;font-size:7.7px;line-height:7.7px;color:#222;letter-spacing:-0.185px;">ISENTO</div>
<div class="t" style="left:764.06px;top:389.48px;font-size:7.7px;line-height:7.7px;font-weight:700;color:#111;letter-spacing:-0.142px;">Fone rep:</div>
<div class="t" style="left:762.82px;top:399.38px;font-size:7.7px;line-height:7.7px;font-weight:700;color:#111;letter-spacing:-0.148px;">Fone ven:</div>
<div class="t" style="left:800.60px;top:399.38px;font-size:7.7px;line-height:7.7px;color:#222;letter-spacing:-0.136px;">(51)3581.4001</div>
<div class="t" style="left:761.58px;top:409.28px;font-size:7.7px;line-height:7.7px;font-weight:700;color:#111;letter-spacing:-0.136px;">Fone tran:</div>
<div class="t" style="left:800.60px;top:409.28px;font-size:7.7px;line-height:7.7px;color:#222;">0</div>
<div class="t" style="left:777.30px;top:419.18px;font-size:7.7px;line-height:7.7px;font-weight:700;color:#111;letter-spacing:-0.139px;">Frete:</div>
<div class="t" style="left:800.60px;top:419.18px;font-size:7.7px;line-height:7.7px;color:#222;letter-spacing:-0.134px;">0-Sem tipo</div>
<div class="a" style="left:527.7px;top:439px;width:448.3px;height:6.3px;background:#c9c9c9;"></div>
<div class="t" style="left:595.80px;top:454.51px;font-size:7.9px;line-height:7.9px;font-weight:700;color:#3a46d6;letter-spacing:-0.229px;">NAS NOTAS E FATURAS FAVOR MENCIONAR O NUMERO DESTA ORDEM DE COMPRA</div>
<div class="t" style="left:679.00px;top:472.38px;font-size:7.7px;line-height:7.7px;color:#111;letter-spacing:-0.156px;">ORDEM DE COMPRA N.: </div>
<div class="t" style="left:766.71px;top:472.68px;font-size:7.7px;line-height:7.7px;font-weight:700;color:#d21b1b;letter-spacing:-0.278px;">15</div>
<div class="t" style="left:690.00px;top:489.08px;font-size:7.7px;line-height:7.7px;color:#111;letter-spacing:-0.184px;">EMISSÃO: 17/01/2024</div>
<div class="a" style="left:527.7px;top:506.7px;width:448.3px;height:6.1px;background:#c9c9c9;"></div>
<div class="a" style="left:527.6px;top:519.8px;width:447.79999999999995px;height:8.600000000000023px;background:#cbcbcb;"></div>
<svg class="a" style="left:520px;top:512px;" width="470" height="63" viewBox="0 0 470 63"><path d="M7.00 7.80 H456.00 M7.00 16.40 H456.00 M7.00 25.70 H456.00 M7.00 35.00 H456.00 M7.00 44.20 H456.00 M7.00 53.70 H456.00 M7.60 7.20 V63.00 M24.40 7.20 V63.00 M62.60 7.20 V63.00 M279.00 7.20 V63.00 M309.00 7.20 V63.00 M329.50 7.20 V63.00 M368.40 7.20 V63.00 M409.40 7.20 V63.00 M455.40 7.20 V63.00 " stroke="#2a2a2a" stroke-width="1.35" fill="none"/></svg>
<div class="t" style="left:533.62px;top:520.70px;font-size:7.8px;line-height:7.8px;font-weight:700;color:#111;">It</div>
<div class="t" style="left:548.55px;top:520.70px;font-size:7.8px;line-height:7.8px;font-weight:700;color:#111;">Produto</div>
<div class="t" style="left:672.15px;top:520.70px;font-size:7.8px;line-height:7.8px;font-weight:700;color:#111;">Descrição</div>
<div class="t" style="left:807.29px;top:520.70px;font-size:7.8px;line-height:7.8px;font-weight:700;color:#111;">Qtd</div>
<div class="t" style="left:834.05px;top:520.70px;font-size:7.8px;line-height:7.8px;font-weight:700;color:#111;">Un</div>
<div class="t" style="left:855.30px;top:520.70px;font-size:7.8px;line-height:7.8px;font-weight:700;color:#111;">Vlr.Unit</div>
<div class="t" style="left:893.80px;top:520.70px;font-size:7.8px;line-height:7.8px;font-weight:700;color:#111;">Vlr.Total</div>
<div class="t" style="left:933.11px;top:520.70px;font-size:7.8px;line-height:7.8px;font-weight:700;color:#111;">Dt.entrega</div>
<div class="t" style="left:529.80px;top:528.50px;font-size:8.5px;line-height:8.5px;color:#111;">1</div>
<div class="t" style="left:546.60px;top:528.50px;font-size:8.5px;line-height:8.5px;color:#111;letter-spacing:-0.399px;">112</div>
<div class="t" style="left:584.80px;top:528.50px;font-size:8.5px;line-height:8.5px;color:#111;letter-spacing:-0.351px;">COMPONENTE 001</div>
<div class="t" style="left:801.20px;top:528.50px;font-size:8.5px;line-height:8.5px;color:#111;letter-spacing:-0.301px;">485,000</div>
<div class="t" style="left:831.20px;top:528.50px;font-size:8.5px;line-height:8.5px;color:#111;letter-spacing:-0.722px;">UN</div>
<div class="t" style="left:851.70px;top:528.50px;font-size:8.5px;line-height:8.5px;color:#111;letter-spacing:-0.306px;">4,1500</div>
<div class="t" style="left:890.60px;top:528.50px;font-size:8.5px;line-height:8.5px;color:#111;letter-spacing:-0.278px;">2.012,75</div>
<div class="t" style="left:931.60px;top:528.50px;font-size:8.5px;line-height:8.5px;color:#111;letter-spacing:-0.278px;">25/01/2024</div>
<div class="t" style="left:529.80px;top:537.85px;font-size:8.5px;line-height:8.5px;color:#111;">2</div>
<div class="t" style="left:546.60px;top:537.85px;font-size:8.5px;line-height:8.5px;color:#111;letter-spacing:-0.399px;">112</div>
<div class="t" style="left:584.80px;top:537.85px;font-size:8.5px;line-height:8.5px;color:#111;letter-spacing:-0.351px;">COMPONENTE 001</div>
<div class="t" style="left:801.20px;top:537.85px;font-size:8.5px;line-height:8.5px;color:#111;letter-spacing:-0.301px;">345,000</div>
<div class="t" style="left:831.20px;top:537.85px;font-size:8.5px;line-height:8.5px;color:#111;letter-spacing:-0.722px;">UN</div>
<div class="t" style="left:851.70px;top:537.85px;font-size:8.5px;line-height:8.5px;color:#111;letter-spacing:-0.306px;">4,1500</div>
<div class="t" style="left:890.60px;top:537.85px;font-size:8.5px;line-height:8.5px;color:#111;letter-spacing:-0.278px;">1.431,75</div>
<div class="t" style="left:931.60px;top:537.85px;font-size:8.5px;line-height:8.5px;color:#111;letter-spacing:-0.278px;">13/02/2024</div>
<div class="t" style="left:529.80px;top:547.20px;font-size:8.5px;line-height:8.5px;color:#111;">3</div>
<div class="t" style="left:546.60px;top:547.20px;font-size:8.5px;line-height:8.5px;color:#111;letter-spacing:-0.399px;">113</div>
<div class="t" style="left:584.80px;top:547.20px;font-size:8.5px;line-height:8.5px;color:#111;letter-spacing:-0.351px;">COMPONENTE 002</div>
<div class="t" style="left:801.20px;top:547.20px;font-size:8.5px;line-height:8.5px;color:#111;letter-spacing:-0.301px;">592,000</div>
<div class="t" style="left:831.20px;top:547.20px;font-size:8.5px;line-height:8.5px;color:#111;letter-spacing:-0.722px;">UN</div>
<div class="t" style="left:851.70px;top:547.20px;font-size:8.5px;line-height:8.5px;color:#111;letter-spacing:-0.306px;">8,3000</div>
<div class="t" style="left:890.60px;top:547.20px;font-size:8.5px;line-height:8.5px;color:#111;letter-spacing:-0.278px;">4.913,60</div>
<div class="t" style="left:931.60px;top:547.20px;font-size:8.5px;line-height:8.5px;color:#111;letter-spacing:-0.278px;">25/01/2024</div>
<div class="t" style="left:529.80px;top:556.55px;font-size:8.5px;line-height:8.5px;color:#111;">4</div>
<div class="t" style="left:546.60px;top:556.55px;font-size:8.5px;line-height:8.5px;color:#111;letter-spacing:-0.399px;">113</div>
<div class="t" style="left:584.80px;top:556.55px;font-size:8.5px;line-height:8.5px;color:#111;letter-spacing:-0.351px;">COMPONENTE 002</div>
<div class="t" style="left:801.20px;top:556.55px;font-size:8.5px;line-height:8.5px;color:#111;letter-spacing:-0.301px;">414,000</div>
<div class="t" style="left:831.20px;top:556.55px;font-size:8.5px;line-height:8.5px;color:#111;letter-spacing:-0.722px;">UN</div>
<div class="t" style="left:851.70px;top:556.55px;font-size:8.5px;line-height:8.5px;color:#111;letter-spacing:-0.306px;">8,3000</div>
<div class="t" style="left:890.60px;top:556.55px;font-size:8.5px;line-height:8.5px;color:#111;letter-spacing:-0.278px;">3.436,20</div>
<div class="t" style="left:931.60px;top:556.55px;font-size:8.5px;line-height:8.5px;color:#111;letter-spacing:-0.278px;">13/02/2024</div>
<div class="t" style="left:529.80px;top:565.90px;font-size:8.5px;line-height:8.5px;color:#111;">5</div>
<div class="t" style="left:546.60px;top:565.90px;font-size:8.5px;line-height:8.5px;color:#111;letter-spacing:-0.399px;">114</div>
<div class="t" style="left:584.80px;top:565.90px;font-size:8.5px;line-height:8.5px;color:#111;letter-spacing:-0.351px;">COMPONENTE 003</div>
<div class="t" style="left:801.20px;top:565.90px;font-size:8.5px;line-height:8.5px;color:#111;letter-spacing:-0.301px;">485,000</div>
<div class="t" style="left:831.20px;top:565.90px;font-size:8.5px;line-height:8.5px;color:#111;letter-spacing:-0.722px;">UN</div>
<div class="t" style="left:851.70px;top:565.90px;font-size:8.5px;line-height:8.5px;color:#111;letter-spacing:-0.306px;">4,1500</div>
<div class="t" style="left:890.60px;top:565.90px;font-size:8.5px;line-height:8.5px;color:#111;letter-spacing:-0.278px;">2.012,75</div>
<div class="t" style="left:931.60px;top:565.90px;font-size:8.5px;line-height:8.5px;color:#111;letter-spacing:-0.278px;">25/01/2024</div>
<div class="a" style="left:494px;top:573px;width:494px;height:3px;background:#fcfcfc;"></div>
<div class="a" style="left:270px;top:573px;width:960px;height:1px;background:#3d64a6;"></div>
<svg class="a" style="left:304px;top:56px;" width="22" height="24" viewBox="0 0 22 24"><g fill="none" stroke="#2c68ca" stroke-width="1.6" stroke-linecap="round" stroke-linejoin="round"><path d="M13.5 2 A10 10 0 1 0 20.5 18.5 A8.5 8.5 0 0 1 13.5 2 Z"/></g></svg>
<svg class="a" style="left:336px;top:56px;" width="26" height="24" viewBox="0 0 26 24"><g fill="none" stroke="#2c68ca" stroke-width="1.6" stroke-linecap="round" stroke-linejoin="round"><path d="M12.5 22.5 C6 22.5 1.5 18 1.5 12 C1.5 6 6.5 1.5 13 1.5 C19.5 1.5 24.5 5.5 24.5 10.5 C24.5 14 22 15.5 19 15.5 H16.5 Q14.5 15.5 14.5 17.5 Q14.5 18.5 15 19.3 Q15.5 20.3 15.2 21.2 Q14.5 22.5 12.5 22.5 Z"/><circle cx="6" cy="11.5" r="0.8" fill="#2c68ca"/><circle cx="7.5" cy="6.8" r="0.6" fill="#2c68ca"/><circle cx="12" cy="5" r="0.8" fill="#2c68ca"/><circle cx="16.5" cy="6.5" r="0.6" fill="#2c68ca"/></g></svg>
<svg class="a" style="left:373px;top:56px;" width="20" height="24" viewBox="0 0 20 24"><g fill="none" stroke="#2c68ca" stroke-width="1.5" stroke-linecap="round" stroke-linejoin="round"><rect x="1.2" y="1.2" width="17.6" height="21.8" rx="2.5"/><path d="M1.2 6.5 H18.8"/><circle cx="6" cy="11" r="0.95" fill="#2c68ca" stroke="none"/><circle cx="10" cy="11" r="0.95" fill="#2c68ca" stroke="none"/><circle cx="14" cy="11" r="0.95" fill="#2c68ca" stroke="none"/><circle cx="6" cy="14.8" r="0.95" fill="#2c68ca" stroke="none"/><circle cx="10" cy="14.8" r="0.95" fill="#2c68ca" stroke="none"/><circle cx="14" cy="14.8" r="0.95" fill="#2c68ca" stroke="none"/><path d="M5 18.8 H11" stroke-width="1.3"/><path d="M14 17.3 V20.3 M12.5 18.8 H15.5" stroke-width="1.1"/></g></svg>
<svg class="a" style="left:404px;top:57px;" width="26" height="22" viewBox="0 0 26 22"><g fill="none" stroke="#2c68ca" stroke-width="1.5" stroke-linecap="round" stroke-linejoin="round"><rect x="1.2" y="1.2" width="23.4" height="19.6" rx="2.5"/><path d="M1.2 5.6 H24.6"/><path d="M19.5 2.8 L20.8 4 L22.1 2.8" stroke-width="1.1"/><path d="M6.5 11.8 H19.8 M6.5 16.3 H19.8"/></g></svg>
<svg class="a" style="left:438px;top:58px;" width="26" height="20" viewBox="0 0 26 20"><g fill="none" stroke="#2c68ca" stroke-width="1.6" stroke-linecap="round" stroke-linejoin="round"><rect x="1.2" y="1.2" width="23" height="17.5" rx="2.5"/><path d="M2 3 L12.7 11.5 L23.5 3"/></g></svg>
<svg class="a" style="left:472px;top:56px;" width="26" height="25" viewBox="0 0 26 25"><g fill="none" stroke="#2c68ca" stroke-width="1.6" stroke-linecap="round" stroke-linejoin="round"><path d="M5.5 2 L9 1.5 L12 8 L9.5 10.5 Q11.5 15 15.5 17 L18 14.5 L24 17.5 L23.5 21 Q22.5 23.5 19.5 23.5 Q11 22.5 5.5 15.5 Q2 10.5 2 6 Q2.5 3 5.5 2 Z"/></g></svg>
<svg class="a" style="left:506px;top:57px;" width="26" height="23" viewBox="0 0 26 23"><g fill="none" stroke="#2c68ca" stroke-width="1.6" stroke-linecap="round" stroke-linejoin="round"><circle cx="9" cy="7" r="4.5"/><path d="M1.5 21.5 V19.5 Q1.5 14.5 6.5 14.5 H11.5 Q16.5 14.5 16.5 19.5 V21.5 Z"/><path d="M15 2.8 A4.3 4.3 0 1 1 17.5 11"/><path d="M19 14.5 Q24.5 14.8 24.5 19.5 V21.5 H19.5"/></g></svg>
<svg class="a" style="left:540px;top:56px;" width="26" height="25" viewBox="0 0 26 25"><g fill="none" stroke="#2c68ca" stroke-width="1.5" stroke-linecap="round" stroke-linejoin="round"><path d="M3 1.5 L1.5 3 L3.5 7 L6 7.5 L11 12.5"/><path d="M6 7.5 L7.5 6 L12.5 11"/><path d="M3 1.5 L7 3.5 L7.5 6"/><path d="M14 15.5 L19.5 21 Q21 22.5 22.5 21 Q24 19.5 22.5 18 L17 12.5"/><path d="M19.5 1.5 Q15 1.5 15 6 Q15 7.2 15.5 8 L2.5 21 Q1 22.5 2.5 24 Q4 25.5 5.5 24 L18.5 11 Q19.3 11.5 20.5 11.5 Q25 11.5 25 7 L22 9.5 L18.5 8 L17 4.5 Z"/></g></svg>
<svg class="a" style="left:574px;top:56px;" width="26" height="24" viewBox="0 0 26 24"><g fill="none" stroke="#2c68ca" stroke-width="1.6" stroke-linecap="round" stroke-linejoin="round"><path d="M8.5 6.5 V4 Q8.5 1.8 10.8 1.8 H15.2 Q17.5 1.8 17.5 4 V6.5"/><rect x="1.5" y="6.5" width="23" height="15.5" rx="2.5"/><path d="M1.5 12.5 H10.5 M15.5 12.5 H24.5"/><rect x="10.5" y="11" width="5" height="3.5" rx="0.5"/></g></svg>
<svg class="a" style="left:48px;top:130px;" width="30" height="34" viewBox="0 0 30 34"><g fill="none" stroke="#2c68ca" stroke-width="2.0" stroke-linecap="round" stroke-linejoin="round"><circle cx="15" cy="8.9" r="6.8"/><path d="M2.2 32 A12.8 11.8 0 0 1 27.8 32 Z"/></g></svg>
<svg class="a" style="left:163px;top:130px;" width="20" height="34" viewBox="0 0 20 34"><g fill="none" stroke="#2c68ca" stroke-width="2.0" stroke-linecap="round" stroke-linejoin="round"><path d="M7.3 2.5 H12.7 V6.5 H7.3 Z"/><path d="M7.3 6.5 Q2.5 8.5 2.5 12.5 Q3.8 15 2.5 17.5 Q3.8 20 2.5 22.5 Q3.8 25 2.5 27.5 V29 Q2.5 32 5.5 32 H14.5 Q17.5 32 17.5 29 V27.5 Q16.2 25 17.5 22.5 Q16.2 20 17.5 17.5 Q16.2 15 17.5 12.5 Q17.5 8.5 12.7 6.5"/><path d="M6.5 16 H13.5 M6.5 23.7 H13.5"/></g></svg>
<svg class="a" style="left:1247px;top:119px;" width="16" height="14" viewBox="0 0 16 14"><rect x="0.5" y="0.5" width="2.2" height="13" fill="#2c68ca"/><path d="M4 7 L9.5 1.5 V4.8 H15.5 V9.2 H9.5 V12.5 Z" fill="#2c68ca"/></svg>
<svg class="a" style="left:1246px;top:145px;" width="18" height="14" viewBox="0 0 18 14"><g fill="none" stroke="#2c68ca" stroke-width="1.2" stroke-linecap="round" stroke-linejoin="round"><path d="M3 1.5 H12 Q13.5 1.5 13.5 3 V8.5"/><path d="M3 1.5 Q1 1.5 1 3.5 Q1 5.5 3 5.5 H4.5 V11 Q4.5 12.5 6 12.5"/><path d="M3 1.5 Q4.5 1.5 4.5 3.5 V5.5"/><rect x="6" y="8.5" width="10.5" height="4" rx="2"/></g></svg>
<svg class="a" style="left:1246px;top:170px;" width="18" height="15" viewBox="0 0 18 15"><g fill="none" stroke="#2c68ca" stroke-width="1.2" stroke-linecap="round" stroke-linejoin="round"><path d="M4 1.5 H16.5 V12 Q16.5 13.5 15 13.5 H3"/><path d="M4 3 V12 Q4 13.5 2.5 13.5 Q1 13.5 1 12 V5.5 H4"/><rect x="6.5" y="4" width="4.5" height="4"/><path d="M13 4.5 H14.5 M13 7 H14.5 M6.5 10.5 H14.5"/></g></svg>
<svg class="a" style="left:1247px;top:195px;" width="16" height="16" viewBox="0 0 16 16"><g fill="none" stroke="#2c68ca" stroke-width="1.2" stroke-linecap="round" stroke-linejoin="round"><circle cx="8" cy="8" r="6.8"/><path d="M5.8 6.3 Q5.8 4 8 4 Q10.2 4 10.2 6 Q10.2 7.3 8.8 7.9 Q8 8.3 8 9.5"/><circle cx="8" cy="11.8" r="0.5" fill="#2c68ca"/></g></svg>
<svg class="a" style="left:1246px;top:221px;" width="18" height="15" viewBox="0 0 18 15"><g fill="none" stroke="#2c68ca" stroke-width="1.2" stroke-linecap="round" stroke-linejoin="round"><circle cx="6.5" cy="4" r="3"/><path d="M1 13.5 V12 Q1 9 4 9 H9 Q11 9 11.5 10.5"/><path d="M1 13.5 H10"/><path d="M11.5 11 L13.5 13 L17 9"/></g></svg>
<svg class="a" style="left:1246px;top:245px;" width="18" height="18" viewBox="0 0 18 18"><g fill="none" stroke="#2c68ca" stroke-width="1.2" stroke-linecap="round" stroke-linejoin="round"><path d="M2.5 10 V8 A6.5 6.5 0 0 1 15.5 8 V10"/><rect x="1.5" y="8.5" width="3" height="5" rx="1.5"/><rect x="13.5" y="8.5" width="3" height="5" rx="1.5"/><path d="M15 13.5 Q15 16 12 16 H9.5"/></g></svg>
<svg class="a" style="left:1246px;top:269px;" width="17" height="17" viewBox="0 0 17 17"><rect x="0" y="0" width="17" height="17" fill="#1160c9"/><path d="M2.5 14.5 L11.5 5.5" stroke="#fff" stroke-width="2"/><path d="M7 4.2 L13 4 L12.8 10 Z" fill="#fff"/></svg>
<svg class="a" style="left:1247px;top:295px;" width="16" height="17" viewBox="0 0 16 17"><g fill="none" stroke="#2c68ca" stroke-width="1.2" stroke-linecap="round" stroke-linejoin="round"><path d="M8 1.5 Q3.2 1.5 3.2 6.5 V10.5 L1.5 13 H14.5 L12.8 10.5 V6.5 Q12.8 1.5 8 1.5 Z"/><path d="M6.2 14.8 Q8 16.5 9.8 14.8"/></g></svg>
<svg class="a" style="left:1247px;top:320px;" width="16" height="17" viewBox="0 0 16 17"><g fill="none" stroke="#2c68ca" stroke-width="1.2" stroke-linecap="round" stroke-linejoin="round"><circle cx="8" cy="4.5" r="3.5"/><path d="M1.5 15.5 V14 Q1.5 10 5.5 10 H10.5 Q14.5 10 14.5 14 V15.5 Z"/></g></svg>
<svg class="a" style="left:1247px;top:344px;" width="16" height="19" viewBox="0 0 16 19"><g fill="none" stroke="#2c68ca" stroke-width="1.2" stroke-linecap="round" stroke-linejoin="round"><ellipse cx="8" cy="4" rx="6.5" ry="2.8"/><path d="M1.5 4 V15 Q1.5 17.8 8 17.8 Q14.5 17.8 14.5 15 V4"/><path d="M1.5 9.5 Q1.5 12.3 8 12.3 Q14.5 12.3 14.5 9.5"/></g></svg>
<svg class="a" style="left:1246px;top:370.5px;" width="18" height="17" viewBox="0 0 18 17"><path d="M5.5 7.2 V8.8 A6 2.6 0 0 0 17.5 8.8 V7.2 Z" fill="#c41a14" stroke="#fff" stroke-width="0.7"/><ellipse cx="11.5" cy="7.2" rx="6" ry="2.6" fill="#e02a20" stroke="#fff" stroke-width="0.7"/><path d="M5.5 4.6 V6.199999999999999 A6 2.6 0 0 0 17.5 6.199999999999999 V4.6 Z" fill="#c41a14" stroke="#fff" stroke-width="0.7"/><ellipse cx="11.5" cy="4.6" rx="6" ry="2.6" fill="#e02a20" stroke="#fff" stroke-width="0.7"/><path d="M5.5 2.2 V3.8000000000000003 A6 2.6 0 0 0 17.5 3.8000000000000003 V2.2 Z" fill="#c41a14" stroke="#fff" stroke-width="0.7"/><ellipse cx="11.5" cy="2.2" rx="6" ry="2.6" fill="#e02a20" stroke="#fff" stroke-width="0.7"/><path d="M0.7999999999999998 13.2 V14.799999999999999 A6 2.6 0 0 0 12.8 14.799999999999999 V13.2 Z" fill="#c41a14" stroke="#fff" stroke-width="0.7"/><ellipse cx="6.8" cy="13.2" rx="6" ry="2.6" fill="#e02a20" stroke="#fff" stroke-width="0.7"/><path d="M0.7999999999999998 10.6 V12.2 A6 2.6 0 0 0 12.8 12.2 V10.6 Z" fill="#c41a14" stroke="#fff" stroke-width="0.7"/><ellipse cx="6.8" cy="10.6" rx="6" ry="2.6" fill="#e02a20" stroke="#fff" stroke-width="0.7"/><path d="M0.7999999999999998 8.0 V9.6 A6 2.6 0 0 0 12.8 9.6 V8.0 Z" fill="#c41a14" stroke="#fff" stroke-width="0.7"/><ellipse cx="6.8" cy="8.0" rx="6" ry="2.6" fill="#e02a20" stroke="#fff" stroke-width="0.7"/></svg>
<svg class="a" style="left:1246px;top:396px;" width="19" height="15" viewBox="0 0 19 15"><g fill="none" stroke="#2c68ca" stroke-width="1.2" stroke-linecap="round" stroke-linejoin="round"><path d="M1.5 12.5 V2.5 Q1.5 1.5 2.5 1.5 H6.5 L8.3 3.3 H13.5 Q14.5 3.3 14.5 4.3 V6"/><path d="M1.5 12.5 L3.8 6.5 Q4.1 5.8 5 5.8 H17.3 Q18.3 5.8 18 6.7 L15.8 12.6 Q15.6 13.5 14.6 13.5 H2.3 Q1.5 13.5 1.5 12.5 Z"/></g></svg>
<svg class="a" style="left:1248px;top:420px;" width="14" height="18" viewBox="0 0 14 18"><g fill="none" stroke="#2c68ca" stroke-width="1.1" stroke-linecap="round" stroke-linejoin="round"><path d="M1.5 3 Q1.5 1.2 3.3 1.2 H8.5 L12.5 5.2 V15 Q12.5 16.8 10.7 16.8 H3.3 Q1.5 16.8 1.5 15 Z"/><path d="M8.5 1.2 V4 Q8.5 5.2 9.7 5.2 H12.5"/><path d="M5.5 9 L4 10.5 L5.5 12 M8.5 9 L10 10.5 L8.5 12"/></g></svg>
</body></html>
